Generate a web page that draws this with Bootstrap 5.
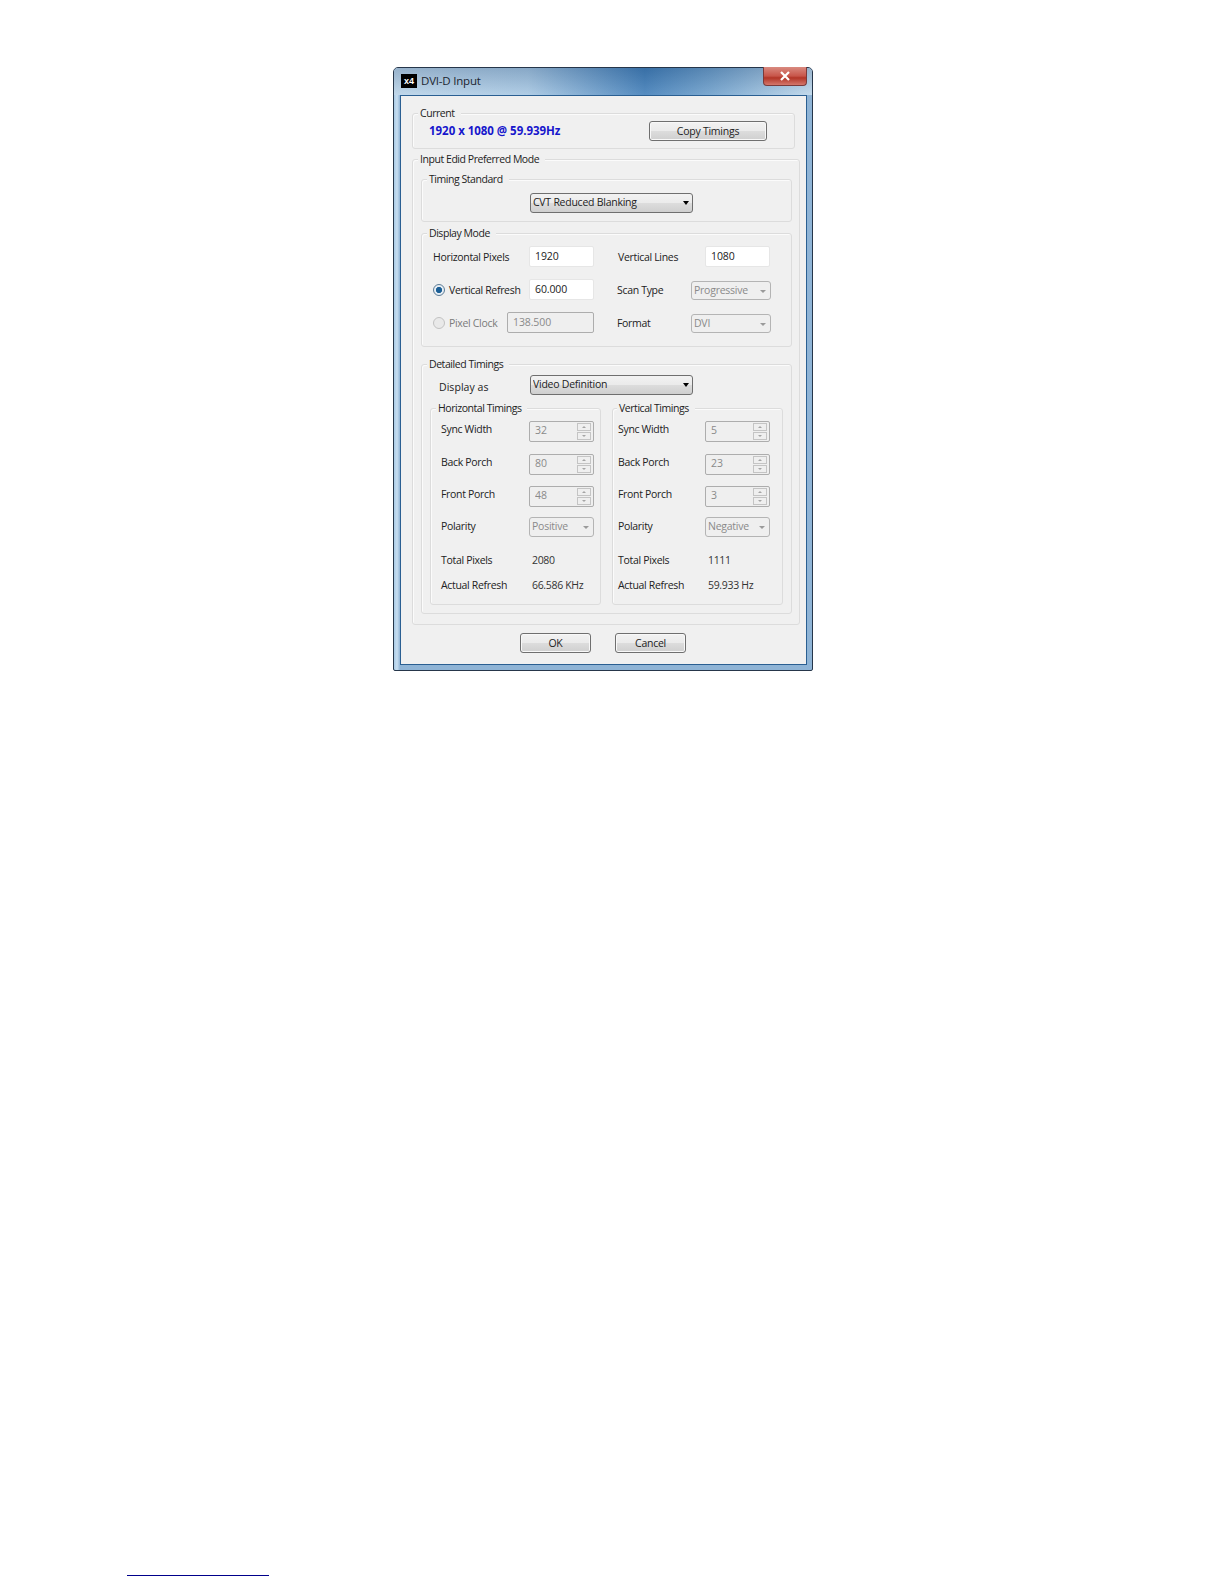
<!DOCTYPE html>
<html lang="en">
<head>
<meta charset="utf-8">
<title>DVI-D Input</title>
<link href="https://cdn.jsdelivr.net/npm/bootstrap@5.3.0/dist/css/bootstrap.min.css" rel="stylesheet">
<style>
html,body{background:#fff;margin:0;padding:0}
body{height:1584px;font-family:"Open Sans","Liberation Sans",sans-serif;font-size:10.5px;letter-spacing:-.32px;color:#222;overflow:hidden}
.page-wrap{padding:67px 0 0 393px}
.win{width:420px;height:604px;border-radius:5px 5px 2px 2px;border:1px solid #26364a;padding:0 5px 6px 6px;background:linear-gradient(90deg,#a9cbe6 0,#c9dff1 3px,#8fb4d6 6px);position:relative}
.win-title{height:27px;margin:0 -5px 0 -6px;padding:0 6px 0 7px;background:linear-gradient(180deg,rgba(30,60,100,.22) 0,rgba(255,255,255,.12) 100%),linear-gradient(90deg,#b9d3e8 0,#a5c6e2 32%,#3f7db8 60%,#6d9fcb 76%,#bcd6ea 100%);border-radius:4px 4px 0 0;position:relative}
.win-ico{width:16px;height:14px;background:#000;color:#fff;font:bold 9px/14px "Liberation Sans",sans-serif;letter-spacing:0;text-align:center;margin-bottom:1px}
.win-name{font-size:11.5px;letter-spacing:-.2px;margin-left:4px;margin-bottom:2px;color:#1c2530;line-height:14px}
.win-close{position:absolute;top:-1px;right:5px;width:44px;height:19px;border:1px solid #7b3a3a;border-top:0;border-radius:0 0 4px 4px;background:linear-gradient(180deg,#d98a80 0,#c8564a 50%,#b23527 60%,#d4776b 100%);color:#fff;display:flex;align-items:center;justify-content:center}
.win-body{height:570px;background:#f0f0f0;border:1px solid #2a5f92;padding:17px 7px 0 11px}
.grp{position:relative;border:1px solid #dcdcdc;border-radius:3px;box-shadow:inset 1px 1px 0 #fbfbfb}
.grp-cap{position:absolute;top:-8px;left:5px;padding:0 6px 0 2px;background:#f0f0f0;line-height:15px;white-space:nowrap;letter-spacing:-.45px}
.grp-cur{width:383px;height:36px;padding:7px 27px 0 16px}
.grp-in{width:388px;height:466px;margin-top:10px;padding:19px 7px 0 8px}
.grp-std{width:371px;height:43px;padding-top:13px;padding-left:108px}
.grp-dm{width:371px;height:114px;margin-top:11px;padding:13px 0 0 11px}
.grp-dt{width:371px;height:250px;margin-top:17px;padding:10px 8px 0 8px}
.grp-sub{width:171px;height:197px;padding:11px 6px 0 10px}
.grp-sub-r{padding-left:5px}
.grp-sub-r .grp-cap{left:4px}
.cur-val{color:#1616cc;font-weight:700;font-size:11.5px;letter-spacing:-.03px;line-height:16px;margin-top:2px}
.xp-btn{padding:0;font-size:10.5px;letter-spacing:-.25px;line-height:1;color:#222;border:1px solid #6f6f6f;border-radius:3px;background:linear-gradient(180deg,#f2f2f2 0,#ebebeb 48%,#dcdcdc 52%,#cfcfcf 100%);box-shadow:inset 0 0 0 1px #f8f8f8}
.btn-copy{width:118px;height:20px}
.btn-dlg{width:71px;height:20px}
.sel-wrap{position:relative;display:block}
.sel-wrap::after{content:"";position:absolute;top:50%;right:4px;margin-top:-2px;border-style:solid;border-width:4px 3.5px 0;border-color:#000 transparent transparent}
.sel-wrap.dis::after{border-color:#9a9a9a transparent transparent;border-width:3px 3.5px 0;margin-top:-1px;right:5px}
.form-select.xp-sel{padding:0 0 0 2px;height:100%;width:100%;min-height:0;font-size:10.5px;letter-spacing:-.25px;line-height:1.3;color:#222;border:1px solid #6f6f6f;border-radius:3px;background:linear-gradient(180deg,#f2f2f2 0,#ebebeb 48%,#dcdcdc 52%,#cfcfcf 100%);box-shadow:none}
.form-select.xp-sel:disabled{background:#efefef;border-color:#b4b4b4;color:#8a8a8a;opacity:1}
.sel-big{width:163px;height:20px}
.sel-fmt{width:80px;height:19px}
.sel-pol{width:65px;height:20px}
.form-control.xp-in{height:21px;min-height:0;width:65px;padding:0 0 2px 5px;font-size:10.5px;letter-spacing:-.1px;line-height:1;color:#222;background:#fff;border:1px solid #e6e6e6;border-radius:2px;box-shadow:none;margin-bottom:2px}
.form-control.xp-in:disabled{background:#efefef;border-color:#adadad;color:#8a8a8a;opacity:1}
.form-control.xp-in.in-clock{width:87px}
.dm-row{display:flex;align-items:center;height:21px}
.dm-row+.dm-row{margin-top:12px}
.dm-lab{width:96px;flex:none}
.dm-lab2{width:87px;flex:none;margin-left:1px}
.dm-lab3{width:74px;flex:none}
.dm-col2{margin-left:23px;display:flex;align-items:center}
.radio-dot{flex:none;width:12px;height:12px;border-radius:50%;border:1px solid #5c7c96;background:radial-gradient(circle,#1b5f96 0,#1b5f96 2.8px,#e6edf3 3.4px);margin:0 4px 2px 0}
.radio-off{border-color:#c2c2c2;background:#e9e9e9}
.rad-txt{width:80px;flex:none;white-space:nowrap}
.rad-off{width:58px;color:#7b7b7b}
.da-row{display:flex;align-items:center;height:19px;padding-left:9px}
.da-lab{width:91px;padding-top:7px;letter-spacing:.05px}
.subs{display:flex;gap:11px;margin-top:14px}
.t-row{display:flex;align-items:center;height:20px}
.t-row+.t-row{margin-top:12px}
.t-row:nth-of-type(2){margin-top:13px}
.t-lab{width:88px;flex:none}
.grp-sub-r .t-lab{width:87px}
.spin{position:relative;width:65px;height:21px;margin-top:2px}
.spin .form-control.xp-in{width:100%;height:100%}
.spin-btns{position:absolute;top:2px;bottom:2px;right:3px;width:14px;display:flex;flex-direction:column;gap:1px}
.spin-btns span{flex:1;border:1px solid #c4c4c4;background:#efefef;display:flex;align-items:center;justify-content:center}
.spin-btns span::after{content:"";border-style:solid;border-color:#a5a5a5 transparent transparent;border-width:2px 2px 0}
.spin-btns span.up::after{border-color:transparent transparent #a5a5a5;border-width:0 2px 2px}
.t-val{white-space:nowrap;margin-left:3px;color:#333}
.sum-row{display:flex;align-items:center;height:16px}
.sum-first{margin-top:16px}
.sum-row+.sum-row{margin-top:9px}
.dlg-btns{display:flex;gap:24px;margin:8px 0 0 108px}
.foot-rule{width:142px;height:1px;background:#00008b;position:absolute;top:1575px;left:127px}
</style>
</head>
<body>
<div class="page-wrap">
 <div class="win">
  <div class="win-title d-flex align-items-center">
   <div class="win-ico">x4</div><div class="win-name">DVI-D Input</div>
   <div class="win-close"><svg width="12" height="10" viewBox="0 0 12 10"><path d="M2 1L10 9M10 1L2 9" stroke="#fff" stroke-width="2.2"/></svg></div>
  </div>
  <div class="win-body">
   <div class="grp grp-cur d-flex justify-content-between">
    <span class="grp-cap">Current</span>
    <div class="cur-val">1920 x 1080 @ 59.939Hz</div>
    <button type="button" class="btn xp-btn btn-copy">Copy Timings</button>
   </div>
   <div class="grp grp-in">
    <span class="grp-cap">Input Edid Preferred Mode</span>
    <div class="grp grp-std">
     <span class="grp-cap">Timing Standard</span>
     <span class="sel-wrap sel-big"><select class="form-select xp-sel"><option>CVT Reduced Blanking</option></select></span>
    </div>
    <div class="grp grp-dm">
     <span class="grp-cap">Display Mode</span>
     <div class="dm-row"><span class="dm-lab">Horizontal Pixels</span><input class="form-control xp-in" value="1920"><div class="dm-col2"><span class="dm-lab2">Vertical Lines</span><input class="form-control xp-in" value="1080"></div></div>
     <div class="dm-row"><span class="radio-dot"></span><span class="rad-txt">Vertical Refresh</span><input class="form-control xp-in" value="60.000"><div class="dm-col2"><span class="dm-lab3">Scan Type</span><span class="sel-wrap dis sel-fmt"><select class="form-select xp-sel" disabled><option>Progressive</option></select></span></div></div>
     <div class="dm-row"><span class="radio-dot radio-off"></span><span class="rad-txt rad-off">Pixel Clock</span><input class="form-control xp-in in-clock" value="138.500" disabled><div class="dm-col2"><span class="dm-lab3">Format</span><span class="sel-wrap dis sel-fmt"><select class="form-select xp-sel" disabled><option>DVI</option></select></span></div></div>
    </div>
    <div class="grp grp-dt">
     <span class="grp-cap">Detailed Timings</span>
     <div class="da-row"><span class="da-lab">Display as</span><span class="sel-wrap sel-big"><select class="form-select xp-sel"><option>Video Definition</option></select></span></div>
     <div class="subs">
      <div class="grp grp-sub">
       <span class="grp-cap">Horizontal Timings</span>
       <div class="t-row"><span class="t-lab">Sync Width</span><div class="spin"><input class="form-control xp-in" value="32" disabled><div class="spin-btns"><span class="up"></span><span></span></div></div></div>
       <div class="t-row"><span class="t-lab">Back Porch</span><div class="spin"><input class="form-control xp-in" value="80" disabled><div class="spin-btns"><span class="up"></span><span></span></div></div></div>
       <div class="t-row"><span class="t-lab">Front Porch</span><div class="spin"><input class="form-control xp-in" value="48" disabled><div class="spin-btns"><span class="up"></span><span></span></div></div></div>
       <div class="t-row"><span class="t-lab">Polarity</span><span class="sel-wrap dis sel-pol"><select class="form-select xp-sel" disabled><option>Positive</option></select></span></div>
       <div class="sum-row sum-first"><span class="t-lab">Total Pixels</span><span class="t-val">2080</span></div>
       <div class="sum-row"><span class="t-lab">Actual Refresh</span><span class="t-val">66.586 KHz</span></div>
      </div>
      <div class="grp grp-sub grp-sub-r">
       <span class="grp-cap">Vertical Timings</span>
       <div class="t-row"><span class="t-lab">Sync Width</span><div class="spin"><input class="form-control xp-in" value="5" disabled><div class="spin-btns"><span class="up"></span><span></span></div></div></div>
       <div class="t-row"><span class="t-lab">Back Porch</span><div class="spin"><input class="form-control xp-in" value="23" disabled><div class="spin-btns"><span class="up"></span><span></span></div></div></div>
       <div class="t-row"><span class="t-lab">Front Porch</span><div class="spin"><input class="form-control xp-in" value="3" disabled><div class="spin-btns"><span class="up"></span><span></span></div></div></div>
       <div class="t-row"><span class="t-lab">Polarity</span><span class="sel-wrap dis sel-pol"><select class="form-select xp-sel" disabled><option>Negative</option></select></span></div>
       <div class="sum-row sum-first"><span class="t-lab">Total Pixels</span><span class="t-val">1111</span></div>
       <div class="sum-row"><span class="t-lab">Actual Refresh</span><span class="t-val">59.933 Hz</span></div>
      </div>
     </div>
    </div>
   </div>
   <div class="dlg-btns">
    <button type="button" class="btn xp-btn btn-dlg">OK</button>
    <button type="button" class="btn xp-btn btn-dlg">Cancel</button>
   </div>
  </div>
 </div>
</div>
<div class="foot-rule"></div>
<script src="https://cdn.jsdelivr.net/npm/bootstrap@5.3.0/dist/js/bootstrap.bundle.min.js"></script>
</body>
</html>
